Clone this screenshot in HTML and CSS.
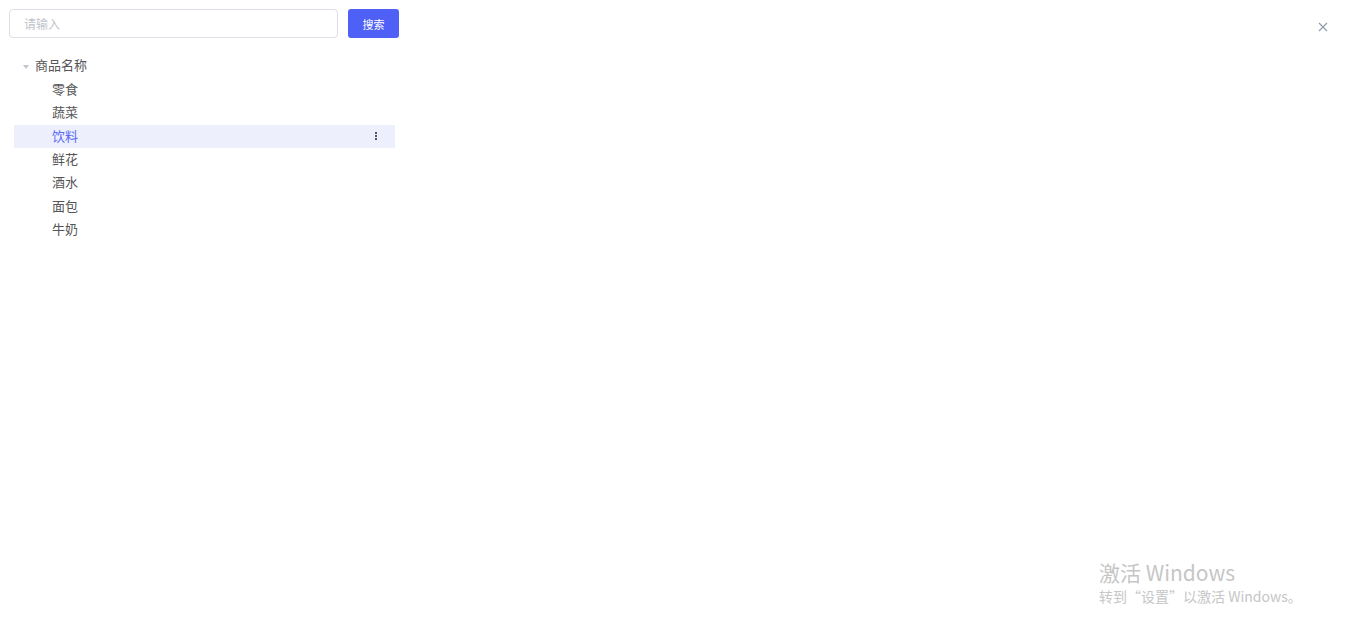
FILE: index.html
```html
<!DOCTYPE html>
<html lang="zh-CN">
<head>
  <meta charset="UTF-8">
  <title>商品分类</title>
  <meta name="viewport" content="width=device-width, initial-scale=1.0">
  <link rel="stylesheet" href="styles.css">
</head>
<body>

  <div class="panel">
    <div class="search">
      <input class="search-input" type="text" placeholder="请输入">
      <button class="btn primary">搜索</button>
    </div>

    <div class="tree">
      <div class="tree-node root">
        <span class="caret"></span>
        <span class="label">商品名称</span>
      </div>
      <div class="tree-node child"><span class="label">零食</span></div>
      <div class="tree-node child"><span class="label">蔬菜</span></div>
      <div class="tree-node child current">
        <span class="label">饮料</span>
        <span class="more"><i></i><i></i><i></i></span>
      </div>
      <div class="tree-node child"><span class="label">鲜花</span></div>
      <div class="tree-node child"><span class="label">酒水</span></div>
      <div class="tree-node child"><span class="label">面包</span></div>
      <div class="tree-node child"><span class="label">牛奶</span></div>
    </div>
  </div>

  <!-- close icon top right -->
  <button class="close" aria-label="关闭">
    <svg width="10" height="10" viewBox="0 0 10 10">
      <path d="M1 1 L9 9 M9 1 L1 9" stroke="#8e9aae" stroke-width="1.1" fill="none"/>
    </svg>
  </button>

  <div class="watermark">
    <div class="wm-title">激活 Windows</div>
    <div class="wm-sub">转到“设置”以激活 Windows。</div>
  </div>

</body>
</html>
```

FILE: styles.css
```css
body {
  margin: 0;
  font-family: "Noto Sans CJK SC", "Liberation Sans", sans-serif;
  color: #555;
  background: #fff;
}

.panel {
  padding: 9px 0 0 9px;
  width: 390px;
}

.search {
  display: flex;
  gap: 10px;
}

.search-input {
  box-sizing: border-box;
  width: 330px;
  height: 29px;
  padding: 0 14px;
  border: 1px solid #dcdfe6;
  border-radius: 4px;
  font-family: inherit;
  font-size: 12px;
  color: #555;
  outline: none;
}

.search-input::placeholder {
  color: #c0c4cc;
}

.btn {
  height: 29px;
  width: 51px;
  border: none;
  border-radius: 3px;
  font-family: inherit;
  font-size: 11px;
  cursor: pointer;
}

.primary {
  background: #4f60f7;
  color: white;
}

.tree {
  margin: 15px 0 0 5px;
  width: 381px;
}

.tree-node {
  display: flex;
  align-items: center;
  height: 23.33px;
  font-size: 13px;
  line-height: 1;
}

.tree-node .label {
  padding-bottom: 2px;
}

.root {
  padding-left: 9px;
  height: 25px;
}

.caret {
  width: 0;
  height: 0;
  border-left: 3px solid transparent;
  border-right: 3px solid transparent;
  border-top: 4px solid #c0c4cc;
  margin: 2px 6px 0 0;
}

.child {
  padding-left: 38px;
}

.current {
  background: #edeffd;
  color: #5a68f5;
}

.more {
  margin-left: auto;
  margin-right: 18px;
  display: flex;
  flex-direction: column;
  gap: 1px;
}

.more i {
  display: block;
  width: 2px;
  height: 2px;
  background: #555;
}

.close {
  position: absolute;
  top: 20px;
  right: 32px;
  padding: 0;
  border: none;
  background: none;
  cursor: pointer;
}

.watermark {
  position: absolute;
  left: 1099px;
  top: 559px;
  color: #c6c6c6;
}

.wm-title {
  font-size: 21px;
  line-height: 27px;
}

.wm-sub {
  font-size: 14px;
  line-height: 20px;
}
```
